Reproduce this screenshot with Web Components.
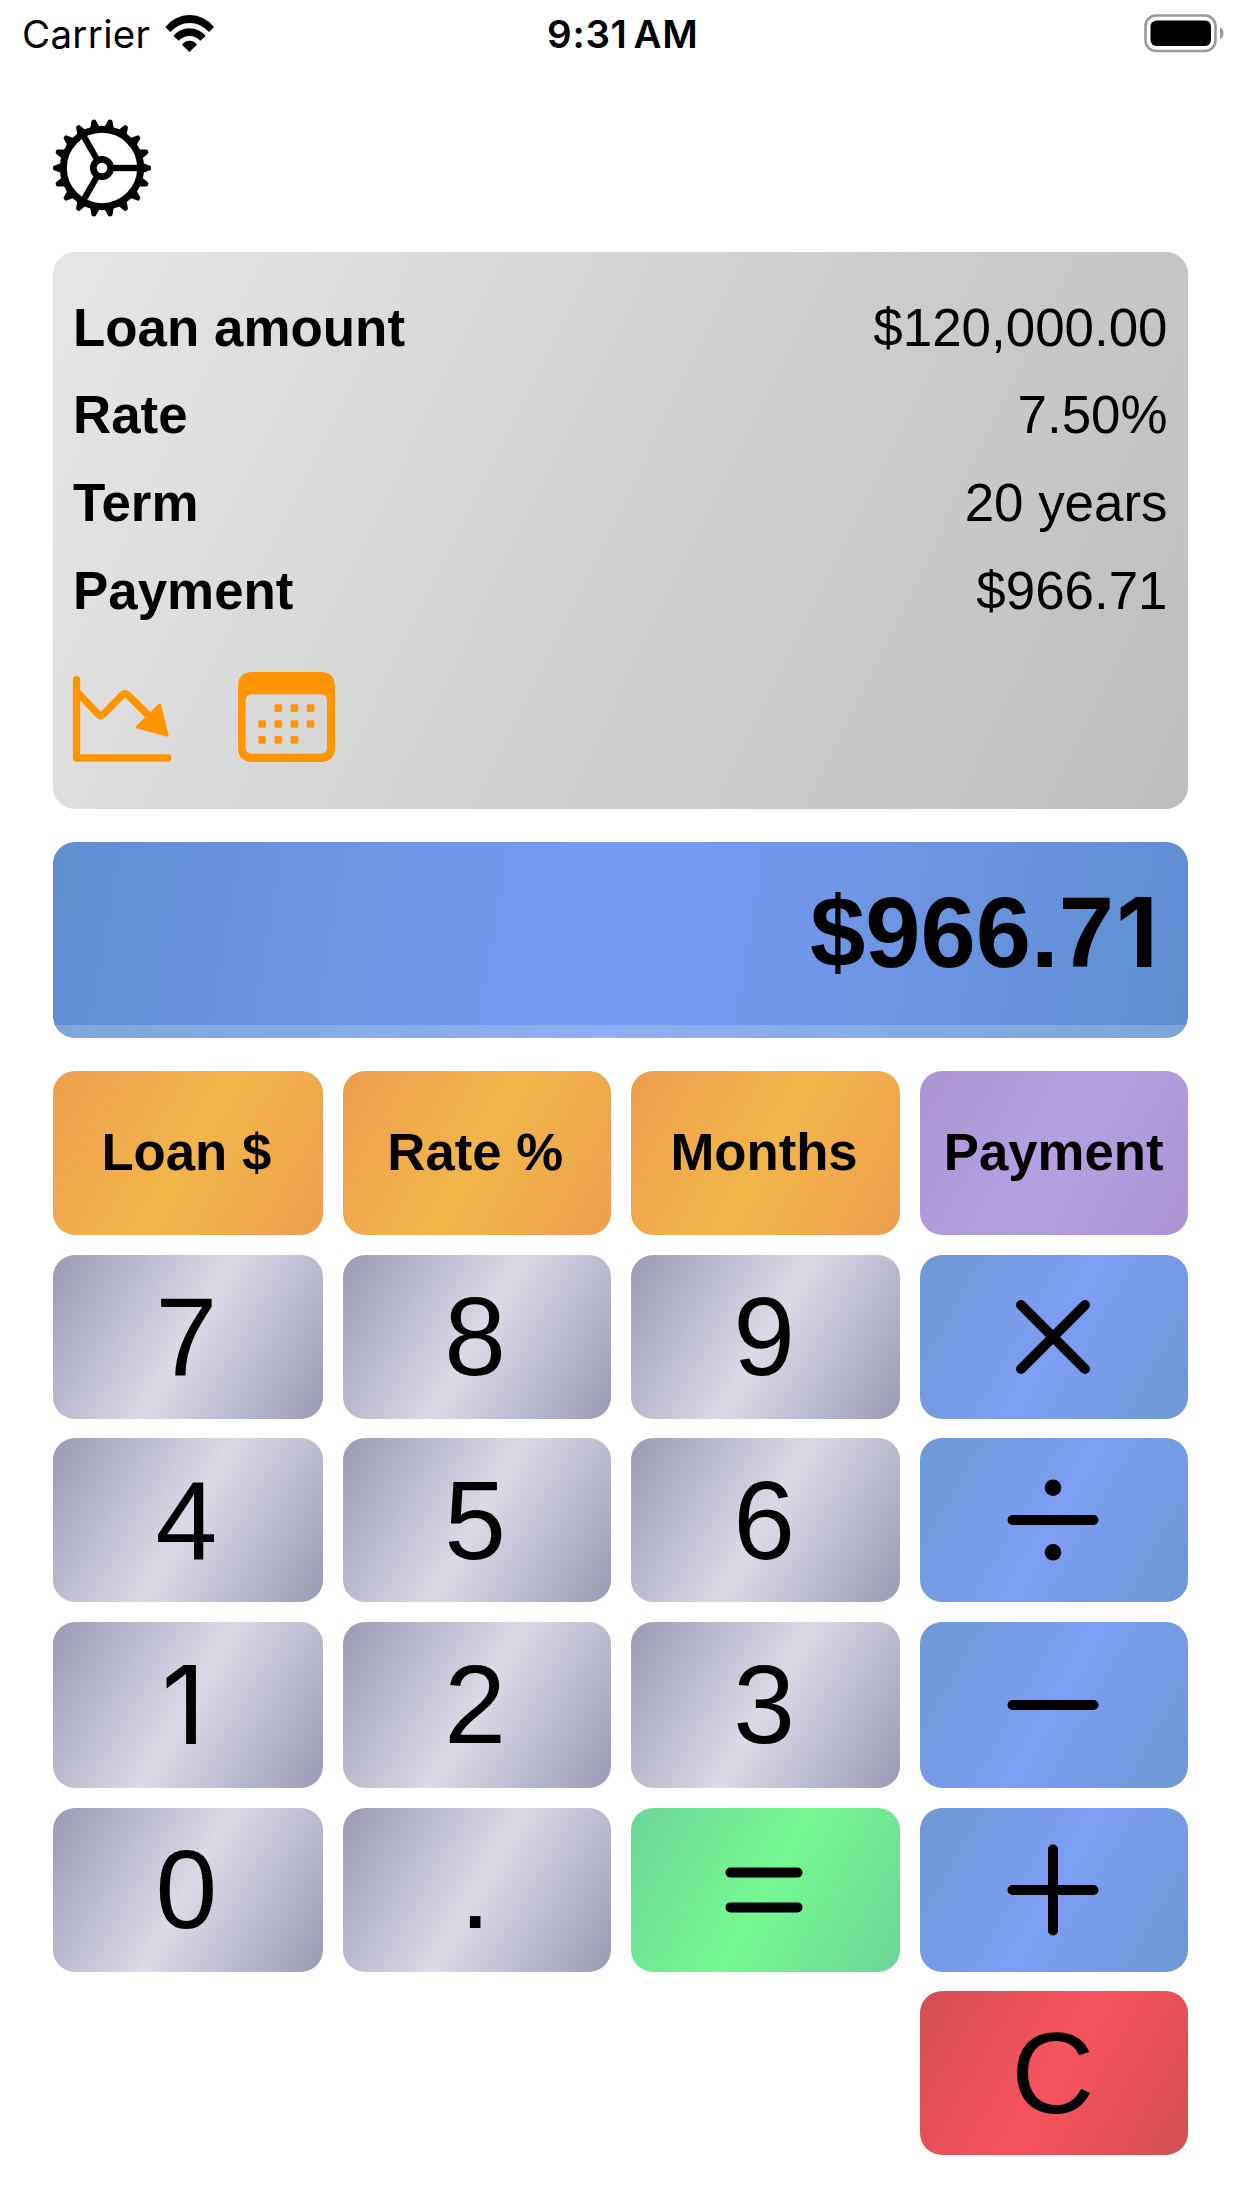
<!DOCTYPE html>
<html lang="en">
<head>
<meta charset="utf-8">
<title>Loan calculator</title>
<style>
body {
    margin: 0;
    background: #fff;
    color: #000;
    font-family: "Liberation Sans", Arial, sans-serif;
}
</style>
</head>
<body>

<loan-app>
    <status-bar slot="status" carrier="Carrier" time="9:31 AM"></status-bar>
    <app-icon slot="toolbar" name="gear"></app-icon>
    <loan-summary slot="summary">
        <summary-row label="Loan amount">$120,000.00</summary-row>
        <summary-row label="Rate">7.50%</summary-row>
        <summary-row label="Term">20 years</summary-row>
        <summary-row label="Payment">$966.71</summary-row>
        <app-icon slot="actions" name="chart"></app-icon>
        <app-icon slot="actions" name="calendar"></app-icon>
    </loan-summary>
    <calc-display slot="display">$966.7<span>1</span></calc-display>
    <calc-keypad slot="keypad">
        <calc-key kind="field">Loan $</calc-key>
        <calc-key kind="field">Rate %</calc-key>
        <calc-key kind="field">Months</calc-key>
        <calc-key kind="result">Payment</calc-key>
        <calc-key>7</calc-key>
        <calc-key>8</calc-key>
        <calc-key>9</calc-key>
        <calc-key kind="operator"><app-icon name="multiply"></app-icon></calc-key>
        <calc-key>4</calc-key>
        <calc-key>5</calc-key>
        <calc-key>6</calc-key>
        <calc-key kind="operator"><app-icon name="divide"></app-icon></calc-key>
        <calc-key plain-one>1</calc-key>
        <calc-key>2</calc-key>
        <calc-key>3</calc-key>
        <calc-key kind="operator"><app-icon name="minus"></app-icon></calc-key>
        <calc-key>0</calc-key>
        <calc-key>.</calc-key>
        <calc-key kind="equals"><app-icon name="equals"></app-icon></calc-key>
        <calc-key kind="operator"><app-icon name="plus"></app-icon></calc-key>
        <calc-key kind="clear">C</calc-key>
    </calc-keypad>
</loan-app>

<script>
function attachTemplate(element, html) {
    const template = document.createElement('template');
    template.innerHTML = html;
    element.attachShadow({ mode: 'open' });
    element.shadowRoot.appendChild(template.content.cloneNode(true));
}

function gearTeeth() {
    let teeth = '';
    for (let angle = 0; angle < 360; angle += 20) {
        teeth += `<path d="M120-10 L142-2 L142 2 L120 10Z" transform="rotate(${angle})"/>`;
    }
    return teeth;
}

function calendarDots() {
    const rows = [[1, 2, 3], [0, 1, 2, 3], [0, 1, 2]];
    return rows.map((cols, r) => cols.map(c =>
        `<rect x="${61 + c * 48.4}" y="${97 + r * 47.5}" width="23" height="23" rx="4"/>`
    ).join('')).join('');
}

const icons = {
    gear: {
        width: 100, height: 100, box: '-150 -150 300 300',
        body: `<g stroke="currentColor" fill="none">
            <circle r="116" stroke-width="21"/>
            <circle r="26" stroke-width="20"/>
            <g stroke-width="19">
                <path d="M32 0H110"/>
                <path d="M32 0H110" transform="rotate(120)"/>
                <path d="M32 0H110" transform="rotate(240)"/>
            </g>
        </g>
        <g fill="currentColor" stroke="currentColor" stroke-width="10" stroke-linejoin="round">${gearTeeth()}</g>`
    },
    chart: {
        width: 100, height: 87, box: '96 107 300 261',
        body: `<g fill="none" stroke="currentColor" stroke-width="22" stroke-linecap="round" stroke-linejoin="round">
            <path d="M109.500 121V356H383"/>
            <path stroke-linecap="butt" d="M109 156L174 224Q182 233 191 224L244 170Q254 157 265 168L328 231"/>
        </g>
        <path d="M359 197L381 287L292 263Z" fill="currentColor" stroke="currentColor" stroke-width="9" stroke-linejoin="round"/>`
    },
    calendar: {
        width: 97, height: 90, box: '0 0 291 270',
        body: `<path fill="currentColor" fill-rule="evenodd" d="M44 0H247Q291 0 291 44V226Q291 270 247 270H44Q0 270 0 226V44Q0 0 44 0Z
            M42 67Q23 67 23 86V226Q23 245 42 245H248Q267 245 267 226V86Q267 67 248 67Z"/>
        <g fill="currentColor">${calendarDots()}</g>`
    },
    wifi: {
        width: 49, height: 37, box: '495 44 147 111',
        body: `<g fill="currentColor">
            <path d="M496 80A92 92 0 0 1 642 80L627 95A76 76 0 0 0 511 95Z"/>
            <path d="M520 107A62 62 0 0 1 617 107L601 121A45 45 0 0 0 536 121Z"/>
            <path d="M546 133A27 27 0 0 1 591 133L568 155Z"/>
        </g>`
    },
    battery: {
        width: 80, height: 39, box: '0 0 80 39',
        body: `<rect x="1.500" y="1.500" width="70" height="35.500" rx="10.500" fill="none" stroke="#999" stroke-width="2.600"/>
        <rect x="6.500" y="6.500" width="60.500" height="25.500" rx="6" fill="#000"/>
        <path d="M76 13Q79.500 15 79.500 19T76 25.500Z" fill="#999"/>`
    },
    multiply: { body: '<path d="M-32-32L32 32M32-32L-32 32"/>' },
    divide: { body: '<path d="M-40.500 0H40.500"/><g fill="currentColor" stroke="none"><circle cy="-32.300" r="8.300"/><circle cy="32.300" r="8.300"/></g>' },
    minus: { body: '<path d="M-40.500 0H40.500"/>' },
    plus: { body: '<path d="M-40.500 0H40.500M0-40.500V40.500"/>' },
    equals: { body: '<path d="M-33.500-17.400H33.500M-33.500 17.400H33.500"/>' }
};

class AppIcon extends HTMLElement {
    constructor() {
        super();
        const icon = icons[this.getAttribute('name')];
        // operator glyphs share one centred 100px box
        const { width = 100, height = 100, box = '-50 -50 100 100' } = icon;
        const stroke = icon.box ? '' : 'fill="none" stroke="currentColor" stroke-width="10" stroke-linecap="round"';
        attachTemplate(this, `
<style>
:host { display: block; flex: none; }
svg { display: block; }
</style>
<svg width="${width}" height="${height}" viewBox="${box}" ${stroke}>${icon.body}</svg>`);
    }
}

class StatusBar extends HTMLElement {
    constructor() {
        super();
        attachTemplate(this, `
<style>
:host {
    display: grid;
    grid-template-columns: 1fr auto 1fr;
    align-items: center;
    height: 66px;
    padding: 0 18.5px 0 22px;
    font-family: Inter, Roboto, sans-serif;
    font-size: 38.5px;
    line-height: 66px;
}
.left {
    display: flex;
    align-items: center;
    gap: 15px;
    letter-spacing: 0.3px;
}
.left span, .time { padding-top: 1px; }
.time {
    font-weight: 600;
    letter-spacing: 0.7px;
    word-spacing: -4.5px;
}
.battery {
    justify-self: end;
}
</style>
<div class="left"><span>${this.getAttribute('carrier')}</span><app-icon name="wifi"></app-icon></div>
<span class="time">${this.getAttribute('time')}</span>
<app-icon class="battery" name="battery"></app-icon>`);
    }
}

class SummaryRow extends HTMLElement {
    constructor() {
        super();
        attachTemplate(this, `
<style>
:host {
    display: flex;
    justify-content: space-between;
    height: 87.7px;
    line-height: 87.7px;
    font-size: 52.9px;
    white-space: nowrap;
}
.label { font-weight: bold; }
</style>
<span class="label">${this.getAttribute('label')}</span>
<span><slot></slot></span>`);
    }
}

class LoanSummary extends HTMLElement {
    constructor() {
        super();
        attachTemplate(this, `
<style>
:host {
    display: block;
    box-sizing: border-box;
    height: 557.6px;
    padding: 32px 20.5px 0 20px;
    border-radius: 22px;
    background: linear-gradient(116.2deg, #e6e6e6, #bdbdbd);
}
.actions {
    display: flex;
    gap: 66px;
    align-items: flex-end;
    height: 90px;
    margin: 37.5px 0 0 -1px;
    color: #ff9500;
}
</style>
<slot></slot>
<div class="actions"><slot name="actions"></slot></div>`);
    }
}

class CalcDisplay extends HTMLElement {
    constructor() {
        super();
        attachTemplate(this, `
<style>
:host {
    display: flex;
    flex-direction: column;
    height: 195.5px;
    border-radius: 22px;
    overflow: hidden;
    background: linear-gradient(99.8deg, #5e8fd0, #789af4, #5e8fd0);
}
.value {
    flex: 1;
    padding-right: 19px;
    font-size: 99.4px;
    font-weight: bold;
    line-height: 181px;
    text-align: right;
}
/* a "1" without the foot serif, on the same advance as the other digits */
::slotted(span) {
    display: inline-block;
    width: 55px;
    font-family: Inter, sans-serif;
    font-size: 96px;
    line-height: 1;
    text-align: center;
    text-indent: -9px;
}
.scroller {
    height: 13px;
    background: rgba(255, 255, 255, 0.2);
}
</style>
<div class="value"><slot></slot></div>
<div class="scroller"></div>`);
    }
}

class CalcKeypad extends HTMLElement {
    constructor() {
        super();
        attachTemplate(this, `
<style>
:host {
    display: grid;
    grid-template-columns: 269.7px 268px 269.7px 267.6px;
    grid-template-rows: 164px 164px 164px 165.6px 164px 164px;
    gap: 19.8px 20px;
}
::slotted([kind="clear"]) { grid-column: 4; }
</style>
<slot></slot>`);
    }
}

class CalcKey extends HTMLElement {
    constructor() {
        super();
        attachTemplate(this, `
<style>
:host {
    --edge: #9b9ab3;
    --shade: #b4b4ca;
    --shine: #dbdae6;
    display: flex;
    align-items: center;
    justify-content: center;
    padding: 2px 3px 0 0;
    border-radius: 22px;
    font-size: 111px;
    line-height: 1;
    background: linear-gradient(119.5deg, var(--edge), var(--shade) 21%, var(--shine) 50%, var(--shade) 79%, var(--edge));
}
:host([kind]) {
    padding-top: 0;
    background: linear-gradient(119.5deg, var(--edge), var(--shine), var(--edge));
}
:host([kind="field"]), :host([kind="result"]) {
    font-size: 52.7px;
    font-weight: bold;
}
:host([plain-one]) {
    padding: 0 9px 0 0;
    font-family: Inter, sans-serif;
    font-size: 108px;
}
:host([kind="field"]) { --edge: #ed9f4f; --shine: #f3b54a; }
:host([kind="result"]) { --edge: #ad94d3; --shine: #b3a1e3; padding-right: 1px; }
:host([kind="operator"]) { --edge: #6c99d4; --shine: #7d9ef4; }
:host([kind="equals"]) { --edge: #6dd599; --shine: #74f88f; }
:host([kind="clear"]) { --edge: #d25052; --shine: #f7525d; font-size: 115px; }
</style>
<slot></slot>`);
    }
}

class LoanApp extends HTMLElement {
    constructor() {
        super();
        attachTemplate(this, `
<style>
:host {
    display: block;
    width: 1242px;
    height: 2208px;
    overflow: hidden;
}
main {
    display: flex;
    flex-direction: column;
    gap: 33px;
    padding: 51.7px 54px 0 53px;
}
.toolbar {
    height: 101px;
    margin-left: -1px;
}
</style>
<slot name="status"></slot>
<main>
    <div class="toolbar"><slot name="toolbar"></slot></div>
    <slot name="summary"></slot>
    <slot name="display"></slot>
    <slot name="keypad"></slot>
</main>`);
    }
}

customElements.define('app-icon', AppIcon);
customElements.define('status-bar', StatusBar);
customElements.define('summary-row', SummaryRow);
customElements.define('loan-summary', LoanSummary);
customElements.define('calc-display', CalcDisplay);
customElements.define('calc-keypad', CalcKeypad);
customElements.define('calc-key', CalcKey);
customElements.define('loan-app', LoanApp);
</script>
</body>
</html>
